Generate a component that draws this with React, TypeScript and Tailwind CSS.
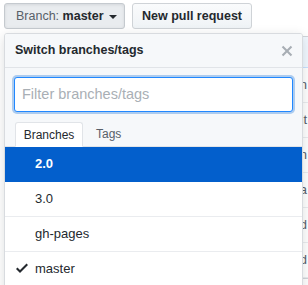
import React from 'react';

const font = { fontFamily: '"Liberation Sans", Arial, sans-serif' };

// rows of the file table behind the menu
const bgRows = ['Update main', 'Edit it', 'Add plan', 'Fix data', 'Add build', 'Update add'];

const branches = [
  { name: '2.0', active: true, current: false },
  { name: '3.0', active: false, current: false },
  { name: 'gh-pages', active: false, current: false },
  { name: 'master', active: false, current: true },
];

const CheckIcon = () => (
  <svg width="12" height="16" viewBox="0 0 12 16" className="fill-[#24292e]">
    <path fillRule="evenodd" d="M12 5l-8 8-4-4 1.5-1.5L4 10l6.5-6.5L12 5z" />
  </svg>
);

const CloseIcon = () => (
  <svg width="12" height="16" viewBox="0 0 12 16" className="fill-[#a8aeb4]">
    <path
      fillRule="evenodd"
      d="M7.48 8l3.75 3.75-1.48 1.48L6 9.48l-3.75 3.75-1.48-1.48L4.52 8 .77 4.25l1.48-1.48L6 6.52l3.75-3.75 1.48 1.48L7.48 8z"
    />
  </svg>
);

const BranchMenu = () => (
  <div className="absolute left-[4px] top-[33px] w-[299px] h-[270px] bg-white border border-[#d8dbdf] rounded-[3px] shadow-[0_3px_12px_rgba(27,31,35,0.15)] overflow-hidden">
    {/* header */}
    <div className="h-[34px] flex items-center justify-between pl-[10px] pr-[9px] bg-[#f6f8fa] border-b border-[#e1e4e8]">
      <span className="text-[12.5px] font-bold text-[#24292e]">Switch branches/tags</span>
      <CloseIcon />
    </div>

    {/* filter + tabs */}
    <div className="bg-[#f6f8fa] pt-[9px]">
      <div className="px-[9px]">
        <div className="h-[35px] bg-white border border-[#2188ff] rounded-[3px] shadow-[0_0_0_2px_rgba(3,102,214,0.3)] flex items-center pl-[7px]">
          <span className="text-[14.5px] text-[#a9afb5]">Filter branches/tags</span>
        </div>
      </div>
      <div className="flex items-end h-[35px] pl-[10px] border-b border-[#e1e4e8]">
        <div className="h-[25px] -mb-px w-[68px] pt-[1px] bg-white border border-[#e1e4e8] border-b-white rounded-t-[3px] flex items-center justify-center text-[12px] text-[#24292e]">
          Branches
        </div>
        <div className="h-[25px] pt-[1px] px-[13px] flex items-center text-[12px] text-[#586069]">Tags</div>
      </div>
    </div>

    {/* list */}
    <div>
      {branches.map((b) => (
        <div
          key={b.name}
          className={`h-[35px] flex items-center border-b ${
            b.active ? 'bg-[#035fcc] border-[#035fcc] text-white font-bold' : 'bg-white border-[#eaecef] text-[#24292e]'
          }`}
        >
          <div className="w-[30px] flex justify-end pr-[7px] -mt-[2px]">{b.current && <CheckIcon />}</div>
          <span className="text-[13px]">{b.name}</span>
        </div>
      ))}
    </div>
  </div>
);

export default function App() {
  return (
    <div className="relative w-[308px] h-[285px] overflow-hidden bg-white" style={font}>
      {/* toolbar */}
      <div className="flex gap-[7px] pl-[4px] pt-[3px]">
        <button className="h-[26px] w-[121px] flex items-center pl-[11px] border border-[#c5cacf] rounded-[3px] bg-[#e9ecef] shadow-[inset_0_1px_3px_rgba(27,31,35,0.1)] text-[12.5px]">
          <span className="text-[#586069]">Branch:&nbsp;</span>
          <span className="font-bold text-[#24292e]">master</span>
          <span className="ml-[5px] mt-[1px] w-0 h-0 border-x-[4px] border-x-transparent border-t-[4px] border-t-[#24292e]" />
        </button>
        <button className="h-[26px] w-[120px] flex items-center justify-center border border-[#cfd3d7] rounded-[3px] bg-gradient-to-b from-[#fafbfc] to-[#eff3f6] text-[12.5px] font-bold text-[#24292e]">
          New pull request
        </button>
      </div>

      {/* file table behind the menu */}
      <div className="mt-[7px] mx-[4px] -mr-[40px] border border-[#d1d5da] rounded-[3px]">
        <div className="h-[31px] bg-[#f1f8ff] border-b border-[#c8e1ff] flex items-center justify-end pr-[44px] text-[13px] text-[#586069]">
          Latest commit on
        </div>
        {bgRows.map((r) => (
          <div key={r} className="h-[35px] border-b border-[#eaecef] flex items-center justify-end pr-[40px] text-[13px] text-[#586069]">
            {r}
          </div>
        ))}
      </div>

      <BranchMenu />
    </div>
  );
}
